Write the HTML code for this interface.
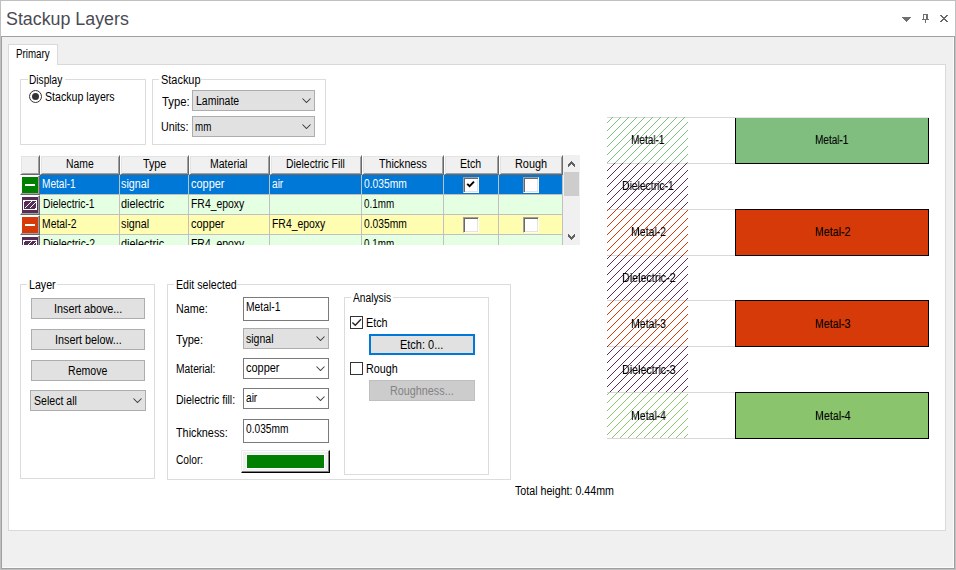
<!DOCTYPE html><html><head><meta charset="utf-8"><title>Stackup Layers</title><style>
*{box-sizing:border-box;margin:0;padding:0}
html,body{width:956px;height:570px;overflow:hidden;background:#f0f0f0}
body{position:relative;font-family:"Liberation Sans",sans-serif;font-size:11px;line-height:13px;color:#000}
.a{position:absolute}
.t{position:absolute;white-space:nowrap;font-size:12px;line-height:20px;transform-origin:0 0}
.gb{position:absolute;border:1px solid #dcdcdc}
.gm{position:absolute;background:#fff;height:3px}
.cb{position:absolute;background:#e1e1e1;border:1px solid #adadad;height:21px}
.cbw{position:absolute;background:#fff;border:1px solid #7a7a7a;height:21px}
.tb{position:absolute;background:#fff;border:1px solid #7a7a7a;height:24px}
.btn{position:absolute;background:#e1e1e1;border:1px solid #adadad;height:21px}
.chev{position:absolute;width:9px;height:5px}
.hc{position:absolute;top:0;height:20px;background:#f0f0f0;border:1px solid;border-color:#fff #696969 #696969 #fff;box-shadow:inset 1px 1px 0 #e3e3e3,inset -1px -1px 0 #a0a0a0}
.rh{position:absolute;left:0;width:20px;height:20px;background:#fff;border:1px solid;border-color:#fff #696969 #696969 #fff;box-shadow:inset -1px -1px 0 #a0a0a0}
.c{position:absolute;height:20px;border-right:1px solid #c0c0c0;border-bottom:1px solid #c0c0c0}
.ck3{position:absolute;width:16px;height:16px;background:#fff;border:1px solid;border-color:#a0a0a0 #fff #fff #a0a0a0;box-shadow:inset 1px 1px 0 #696969,inset -1px -1px 0 #e3e3e3}
</style></head><body>
<div class="a" style="left:0;top:0;width:956px;height:570px;border:1px solid #c0c0c0"></div>
<div class="a" style="left:1px;top:1px;width:954px;height:35px;background:#fff"></div>
<div class="t" style="left:5.6px;top:9px;transform:scaleX(1.0183);font-size:17.5px;color:#4a4a54;">Stackup Layers</div>
<svg class="a" style="left:902px;top:17px" width="9" height="5" shape-rendering="crispEdges"><path d="M0,0H9V1H8V2H7V3H6V4H5V5H4V4H3V3H2V2H1V1H0Z" fill="#707070"/></svg>
<svg class="a" style="left:922px;top:14px" width="8" height="9" shape-rendering="crispEdges"><g fill="#707070"><rect x="1" y="0" width="5" height="1"/><rect x="1" y="0" width="1" height="6"/><rect x="4" y="0" width="2" height="6"/><rect x="0" y="5" width="7" height="1"/><rect x="3" y="6" width="1" height="3"/></g></svg>
<svg class="a" style="left:940px;top:15px" width="8" height="7" shape-rendering="crispEdges"><g fill="#686868"><rect x="0" y="0" width="2" height="1"/><rect x="6" y="0" width="2" height="1"/><rect x="1" y="1" width="2" height="1"/><rect x="5" y="1" width="2" height="1"/><rect x="2" y="2" width="4" height="1"/><rect x="3" y="3" width="2" height="1"/><rect x="2" y="4" width="4" height="1"/><rect x="1" y="5" width="2" height="1"/><rect x="5" y="5" width="2" height="1"/><rect x="0" y="6" width="2" height="1"/><rect x="6" y="6" width="2" height="1"/></g></svg>
<div class="a" style="left:1px;top:36px;width:954px;height:533px;border:1px solid #a0a0a0;box-shadow:inset -1px -1px 0 #fafafa"></div>
<div class="a" style="left:8px;top:64px;width:938px;height:467px;background:#fff;border:1px solid #d9d9d9"></div>
<div class="a" style="left:8px;top:44px;width:50px;height:21px;background:#fff;border:1px solid #d9d9d9;border-bottom:none"></div>
<div class="t" style="left:15.8px;top:44px;transform:scaleX(0.8119);">Primary</div>
<div class="gb" style="left:20px;top:79px;width:126px;height:66px"></div><div class="gm" style="left:28px;top:78px;width:37px"></div><div class="t" style="left:29.1px;top:70px;transform:scaleX(0.845);">Display</div>
<div class="gb" style="left:152px;top:79px;width:174px;height:66px"></div><div class="gm" style="left:159px;top:78px;width:42px"></div><div class="t" style="left:160.9px;top:70px;transform:scaleX(0.9116);">Stackup</div>
<div class="gb" style="left:20px;top:284px;width:135px;height:195px"></div><div class="gm" style="left:27px;top:283px;width:30px"></div><div class="t" style="left:28.9px;top:275px;transform:scaleX(0.8867);">Layer</div>
<div class="gb" style="left:167px;top:284px;width:344px;height:196px"></div><div class="gm" style="left:174px;top:283px;width:63px"></div><div class="t" style="left:176.0px;top:275px;transform:scaleX(0.8838);">Edit selected</div>
<div class="gb" style="left:344px;top:297px;width:145px;height:178px"></div><div class="gm" style="left:351px;top:296px;width:42px"></div><div class="t" style="left:352.6px;top:288px;transform:scaleX(0.8533);">Analysis</div>
<svg class="a" style="left:29px;top:90px" width="13" height="13"><circle cx="6.5" cy="6.5" r="6" fill="#fff" stroke="#333" stroke-width="1"/><circle cx="6.5" cy="6.5" r="3.5" fill="#333"/></svg>
<div class="t" style="left:45.1px;top:87px;transform:scaleX(0.8848);">Stackup layers</div>
<div class="t" style="left:161.6px;top:92px;transform:scaleX(0.9414);">Type:</div>
<div class="cb" style="left:192px;top:90px;width:123px"></div>
<div class="t" style="left:195.6px;top:91px;transform:scaleX(0.8735);">Laminate</div>
<svg class="chev" style="left:301.5px;top:98px" viewBox="0 0 9 5"><path d="M0.5,0.5L4.5,4.5L8.5,0.5" fill="none" stroke="#3a3a3a" stroke-width="1.05"/></svg>
<div class="t" style="left:161.1px;top:117px;transform:scaleX(0.8933);">Units:</div>
<div class="cb" style="left:192px;top:116px;width:123px"></div>
<div class="t" style="left:195.1px;top:117px;transform:scaleX(0.815);">mm</div>
<svg class="chev" style="left:301.5px;top:124px" viewBox="0 0 9 5"><path d="M0.5,0.5L4.5,4.5L8.5,0.5" fill="none" stroke="#3a3a3a" stroke-width="1.05"/></svg>
<div class="a" style="left:20px;top:155px;width:560px;height:90px;overflow:hidden;background:#fff">
<div class="hc" style="left:0;width:20px"></div>
<div class="hc" style="left:20px;width:80px"></div>
<div class="hc" style="left:100px;width:69px"></div>
<div class="hc" style="left:169px;width:81px"></div>
<div class="hc" style="left:250px;width:92px"></div>
<div class="hc" style="left:342px;width:82px"></div>
<div class="hc" style="left:424px;width:55px"></div>
<div class="hc" style="left:479px;width:64px"></div>
<div class="rh" style="top:20px"></div>
<div class="a" style="left:2px;top:22px;width:16px;height:16px;background:#008000"><div class="a" style="left:3px;top:7px;width:10px;height:2px;background:#fff"></div></div>
<div class="c" style="left:20px;top:20px;width:80px;background:#0078d7"></div>
<div class="c" style="left:100px;top:20px;width:69px;background:#0078d7"></div>
<div class="c" style="left:169px;top:20px;width:81px;background:#0078d7"></div>
<div class="c" style="left:250px;top:20px;width:92px;background:#0078d7"></div>
<div class="c" style="left:342px;top:20px;width:82px;background:#0078d7"></div>
<div class="c" style="left:424px;top:20px;width:55px;background:#0078d7"></div>
<div class="c" style="left:479px;top:20px;width:64px;background:#0078d7"></div>
<div class="t" style="left:22.3px;top:19px;transform:scaleX(0.84);color:#fff;">Metal-1</div>
<div class="t" style="left:101.2px;top:19px;transform:scaleX(0.8968);color:#fff;">signal</div>
<div class="t" style="left:170.6px;top:19px;transform:scaleX(0.9135);color:#fff;">copper</div>
<div class="t" style="left:251.6px;top:19px;transform:scaleX(0.8429);color:#fff;">air</div>
<div class="t" style="left:344.0px;top:19px;transform:scaleX(0.856);color:#fff;">0.035mm</div>
<div class="ck3" style="left:443px;top:22px"></div>
<div class="ck3" style="left:503px;top:22px"></div>
<div class="rh" style="top:40px"></div>
<svg class="a" style="left:2px;top:42px" width="16" height="16" shape-rendering="crispEdges"><rect width="16" height="16" fill="#552d55"/><rect x="1" y="3" width="14" height="10" fill="#fff"/><rect x="2" y="4" width="12" height="8" fill="#552d55"/><g fill="#fff"><path d="M3,11h1v-1h1v-1h1v-1h1v-1h1v-1h1v-1h1v-1h-1v1h-1v1h-1v1h-1v1h-1v1h-1v1h-1z"/><path d="M8,11h1v-1h1v-1h1v-1h1v-1h1v-1h1v-1h-1v1h-1v1h-1v1h-1v1h-1v1h-1z"/><rect x="2" y="4" width="1" height="1"/><rect x="13" y="11" width="1" height="1"/></g></svg>
<div class="c" style="left:20px;top:40px;width:80px;background:#e5ffe2"></div>
<div class="c" style="left:100px;top:40px;width:69px;background:#e5ffe2"></div>
<div class="c" style="left:169px;top:40px;width:81px;background:#e5ffe2"></div>
<div class="c" style="left:250px;top:40px;width:92px;background:#e5ffe2"></div>
<div class="c" style="left:342px;top:40px;width:82px;background:#e5ffe2"></div>
<div class="c" style="left:424px;top:40px;width:55px;background:#e5ffe2"></div>
<div class="c" style="left:479px;top:40px;width:64px;background:#e5ffe2"></div>
<div class="t" style="left:22.8px;top:39px;transform:scaleX(0.86);">Dielectric-1</div>
<div class="t" style="left:101.2px;top:39px;transform:scaleX(0.9106);">dielectric</div>
<div class="t" style="left:171.0px;top:39px;transform:scaleX(0.8677);">FR4_epoxy</div>
<div class="t" style="left:344.0px;top:39px;transform:scaleX(0.8216);">0.1mm</div>
<div class="rh" style="top:60px"></div>
<div class="a" style="left:2px;top:62px;width:16px;height:16px;background:#d63a09"><div class="a" style="left:3px;top:7px;width:10px;height:2px;background:#fff"></div></div>
<div class="c" style="left:20px;top:60px;width:80px;background:#fffdb0"></div>
<div class="c" style="left:100px;top:60px;width:69px;background:#fffdb0"></div>
<div class="c" style="left:169px;top:60px;width:81px;background:#fffdb0"></div>
<div class="c" style="left:250px;top:60px;width:92px;background:#fffdb0"></div>
<div class="c" style="left:342px;top:60px;width:82px;background:#fffdb0"></div>
<div class="c" style="left:424px;top:60px;width:55px;background:#fffdb0"></div>
<div class="c" style="left:479px;top:60px;width:64px;background:#fffdb0"></div>
<div class="t" style="left:22.3px;top:59px;transform:scaleX(0.865);">Metal-2</div>
<div class="t" style="left:101.2px;top:59px;transform:scaleX(0.8968);">signal</div>
<div class="t" style="left:170.6px;top:59px;transform:scaleX(0.9135);">copper</div>
<div class="t" style="left:252.0px;top:59px;transform:scaleX(0.8677);">FR4_epoxy</div>
<div class="t" style="left:344.0px;top:59px;transform:scaleX(0.856);">0.035mm</div>
<div class="ck3" style="left:443px;top:62px"></div>
<div class="ck3" style="left:503px;top:62px"></div>
<div class="rh" style="top:80px"></div>
<svg class="a" style="left:2px;top:82px" width="16" height="16" shape-rendering="crispEdges"><rect width="16" height="16" fill="#552d55"/><rect x="1" y="3" width="14" height="10" fill="#fff"/><rect x="2" y="4" width="12" height="8" fill="#552d55"/><g fill="#fff"><path d="M3,11h1v-1h1v-1h1v-1h1v-1h1v-1h1v-1h1v-1h-1v1h-1v1h-1v1h-1v1h-1v1h-1v1h-1z"/><path d="M8,11h1v-1h1v-1h1v-1h1v-1h1v-1h1v-1h-1v1h-1v1h-1v1h-1v1h-1v1h-1z"/><rect x="2" y="4" width="1" height="1"/><rect x="13" y="11" width="1" height="1"/></g></svg>
<div class="c" style="left:20px;top:80px;width:80px;background:#e5ffe2"></div>
<div class="c" style="left:100px;top:80px;width:69px;background:#e5ffe2"></div>
<div class="c" style="left:169px;top:80px;width:81px;background:#e5ffe2"></div>
<div class="c" style="left:250px;top:80px;width:92px;background:#e5ffe2"></div>
<div class="c" style="left:342px;top:80px;width:82px;background:#e5ffe2"></div>
<div class="c" style="left:424px;top:80px;width:55px;background:#e5ffe2"></div>
<div class="c" style="left:479px;top:80px;width:64px;background:#e5ffe2"></div>
<div class="t" style="left:22.8px;top:79px;transform:scaleX(0.8683);">Dielectric-2</div>
<div class="t" style="left:101.2px;top:79px;transform:scaleX(0.9106);">dielectric</div>
<div class="t" style="left:171.0px;top:79px;transform:scaleX(0.8677);">FR4_epoxy</div>
<div class="t" style="left:344.0px;top:79px;transform:scaleX(0.8216);">0.1mm</div>
<svg class="a" style="left:446px;top:25px" width="10" height="9"><path d="M1.2,3.8L3.6,6.2L8,1.6" fill="none" stroke="#000" stroke-width="1.9"/></svg>
<div class="a" style="left:543px;top:0;width:17px;height:90px;background:#f0f0f0"></div>
<div class="a" style="left:544px;top:17px;width:15px;height:24px;background:#cdcdcd"></div>
<svg class="a" style="left:548px;top:6px" width="7" height="6" shape-rendering="crispEdges"><g fill="#606060"><rect x="0" y="3" width="1" height="3"/><rect x="6" y="3" width="1" height="3"/><rect x="1" y="2" width="1" height="3"/><rect x="5" y="2" width="1" height="3"/><rect x="2" y="1" width="1" height="3"/><rect x="4" y="1" width="1" height="3"/><rect x="3" y="0" width="1" height="3"/><rect x="3" y="0" width="1" height="3"/></g></svg>
<svg class="a" style="left:548px;top:79px" width="7" height="6" shape-rendering="crispEdges"><g fill="#606060"><rect x="0" y="0" width="1" height="3"/><rect x="6" y="0" width="1" height="3"/><rect x="1" y="1" width="1" height="3"/><rect x="5" y="1" width="1" height="3"/><rect x="2" y="2" width="1" height="3"/><rect x="4" y="2" width="1" height="3"/><rect x="3" y="3" width="1" height="3"/><rect x="3" y="3" width="1" height="3"/></g></svg>
</div>
<div class="t" style="left:65.8px;top:154px;transform:scaleX(0.8656);">Name</div>
<div class="t" style="left:142.6px;top:154px;transform:scaleX(0.8923);">Type</div>
<div class="t" style="left:210.2px;top:154px;transform:scaleX(0.8762);">Material</div>
<div class="t" style="left:286.0px;top:154px;transform:scaleX(0.8647);">Dielectric Fill</div>
<div class="t" style="left:379.0px;top:154px;transform:scaleX(0.8852);">Thickness</div>
<div class="t" style="left:460.2px;top:154px;transform:scaleX(0.8833);">Etch</div>
<div class="t" style="left:515.0px;top:154px;transform:scaleX(0.9086);">Rough</div>
<div class="btn" style="left:31px;top:298px;width:114px;"></div>
<div class="t" style="left:53.5px;top:299px;transform:scaleX(0.8987);">Insert above...</div>
<div class="btn" style="left:31px;top:329px;width:114px;"></div>
<div class="t" style="left:54.5px;top:330px;transform:scaleX(0.9);">Insert below...</div>
<div class="btn" style="left:31px;top:360px;width:114px;"></div>
<div class="t" style="left:68.1px;top:361px;transform:scaleX(0.88);">Remove</div>
<div class="cb" style="left:30px;top:390px;width:116px"></div>
<div class="t" style="left:34.0px;top:391px;transform:scaleX(0.8813);">Select all</div>
<svg class="chev" style="left:132.5px;top:398px" viewBox="0 0 9 5"><path d="M0.5,0.5L4.5,4.5L8.5,0.5" fill="none" stroke="#3a3a3a" stroke-width="1.05"/></svg>
<div class="t" style="left:175.6px;top:299px;transform:scaleX(0.8943);">Name:</div>
<div class="tb" style="left:243px;top:297px;width:86px"></div>
<div class="t" style="left:246.0px;top:297px;transform:scaleX(0.86);">Metal-1</div>
<div class="t" style="left:176.1px;top:330px;transform:scaleX(0.9241);">Type:</div>
<div class="cb" style="left:243px;top:328px;width:86px"></div>
<div class="t" style="left:246.2px;top:329px;transform:scaleX(0.8774);">signal</div>
<svg class="chev" style="left:315.5px;top:336px" viewBox="0 0 9 5"><path d="M0.5,0.5L4.5,4.5L8.5,0.5" fill="none" stroke="#3a3a3a" stroke-width="1.05"/></svg>
<div class="t" style="left:176.0px;top:359px;transform:scaleX(0.8565);">Material:</div>
<div class="cbw" style="left:243px;top:358px;width:86px"></div>
<div class="t" style="left:245.6px;top:358px;transform:scaleX(0.9135);">copper</div>
<svg class="chev" style="left:315.5px;top:366px" viewBox="0 0 9 5"><path d="M0.5,0.5L4.5,4.5L8.5,0.5" fill="none" stroke="#3a3a3a" stroke-width="1.05"/></svg>
<div class="t" style="left:176.0px;top:390px;transform:scaleX(0.8776);">Dielectric fill:</div>
<div class="cbw" style="left:243px;top:388px;width:86px"></div>
<div class="t" style="left:245.6px;top:388px;transform:scaleX(0.8429);">air</div>
<svg class="chev" style="left:315.5px;top:396px" viewBox="0 0 9 5"><path d="M0.5,0.5L4.5,4.5L8.5,0.5" fill="none" stroke="#3a3a3a" stroke-width="1.05"/></svg>
<div class="t" style="left:176.4px;top:423px;transform:scaleX(0.9018);">Thickness:</div>
<div class="tb" style="left:243px;top:419px;width:86px"></div>
<div class="t" style="left:246.0px;top:419px;transform:scaleX(0.848);">0.035mm</div>
<div class="t" style="left:175.6px;top:450px;transform:scaleX(0.85);">Color:</div>
<div class="a" style="left:241px;top:450px;width:89px;height:23px;background:#f0f0f0;border:1px solid;border-color:#ececec #000 #000 #ececec;box-shadow:inset -1px -1px 0 #808080,inset 1px 1px 0 #fff"></div>
<div class="a" style="left:246px;top:454px;width:79px;height:15px;background:#fff"></div>
<div class="a" style="left:247px;top:455px;width:77px;height:13px;background:#008000"></div>
<svg class="a" style="left:350px;top:316px" width="13" height="13"><rect x="0.5" y="0.5" width="12" height="12" fill="#fff" stroke="#333"/><path d="M2.4,6.4L5.3,9.3L11,3.3" fill="none" stroke="#222" stroke-width="1.35"/></svg>
<div class="t" style="left:366.2px;top:313px;transform:scaleX(0.9);">Etch</div>
<div class="btn" style="left:369px;top:334px;width:106px;border:2px solid #0078d7"></div>
<div class="t" style="left:400.0px;top:335px;transform:scaleX(0.9149);">Etch: 0...</div>
<svg class="a" style="left:350px;top:362px" width="13" height="13"><rect x="0.5" y="0.5" width="12" height="12" fill="#fff" stroke="#333"/></svg>
<div class="t" style="left:366.0px;top:359px;transform:scaleX(0.8971);">Rough</div>
<div class="btn" style="left:369px;top:380px;width:106px;background:#cccccc;border-color:#bfbfbf"></div>
<div class="t" style="left:390.0px;top:381px;transform:scaleX(0.9);color:#838383;">Roughness...</div>
<div class="t" style="left:515.1px;top:481px;transform:scaleX(0.8883);">Total height: 0.44mm</div>
<svg class="a" style="left:607px;top:117px" width="323" height="323" shape-rendering="crispEdges"><defs><pattern id="p5a2d5a" width="8" height="8" patternUnits="userSpaceOnUse"><rect x="5" y="0" width="1" height="1" fill="#5a2d5a"/><rect x="4" y="1" width="1" height="1" fill="#5a2d5a"/><rect x="3" y="2" width="1" height="1" fill="#5a2d5a"/><rect x="2" y="3" width="1" height="1" fill="#5a2d5a"/><rect x="1" y="4" width="1" height="1" fill="#5a2d5a"/><rect x="0" y="5" width="1" height="1" fill="#5a2d5a"/><rect x="7" y="6" width="1" height="1" fill="#5a2d5a"/><rect x="6" y="7" width="1" height="1" fill="#5a2d5a"/></pattern><pattern id="p80c080" width="8" height="8" patternUnits="userSpaceOnUse"><rect x="5" y="0" width="1" height="1" fill="#80c080"/><rect x="4" y="1" width="1" height="1" fill="#80c080"/><rect x="3" y="2" width="1" height="1" fill="#80c080"/><rect x="2" y="3" width="1" height="1" fill="#80c080"/><rect x="1" y="4" width="1" height="1" fill="#80c080"/><rect x="0" y="5" width="1" height="1" fill="#80c080"/><rect x="7" y="6" width="1" height="1" fill="#80c080"/><rect x="6" y="7" width="1" height="1" fill="#80c080"/></pattern><pattern id="p8cc56c" width="8" height="8" patternUnits="userSpaceOnUse"><rect x="5" y="0" width="1" height="1" fill="#8cc56c"/><rect x="4" y="1" width="1" height="1" fill="#8cc56c"/><rect x="3" y="2" width="1" height="1" fill="#8cc56c"/><rect x="2" y="3" width="1" height="1" fill="#8cc56c"/><rect x="1" y="4" width="1" height="1" fill="#8cc56c"/><rect x="0" y="5" width="1" height="1" fill="#8cc56c"/><rect x="7" y="6" width="1" height="1" fill="#8cc56c"/><rect x="6" y="7" width="1" height="1" fill="#8cc56c"/></pattern><pattern id="pd9390a" width="8" height="8" patternUnits="userSpaceOnUse"><rect x="5" y="0" width="1" height="1" fill="#d9390a"/><rect x="4" y="1" width="1" height="1" fill="#d9390a"/><rect x="3" y="2" width="1" height="1" fill="#d9390a"/><rect x="2" y="3" width="1" height="1" fill="#d9390a"/><rect x="1" y="4" width="1" height="1" fill="#d9390a"/><rect x="0" y="5" width="1" height="1" fill="#d9390a"/><rect x="7" y="6" width="1" height="1" fill="#d9390a"/><rect x="6" y="7" width="1" height="1" fill="#d9390a"/></pattern></defs><rect x="0" y="0" width="128" height="1" fill="#d8d8d8"/><rect x="0" y="46" width="128" height="1" fill="#d8d8d8"/><rect x="0" y="92" width="128" height="1" fill="#d8d8d8"/><rect x="0" y="138" width="128" height="1" fill="#d8d8d8"/><rect x="0" y="183" width="128" height="1" fill="#d8d8d8"/><rect x="0" y="229" width="128" height="1" fill="#d8d8d8"/><rect x="0" y="275" width="128" height="1" fill="#d8d8d8"/><rect x="0" y="321" width="128" height="1" fill="#d8d8d8"/><rect x="0" y="0" width="81" height="46" fill="url(#p80c080)"/><rect x="0" y="46" width="81" height="46" fill="url(#p5a2d5a)"/><rect x="0" y="92" width="81" height="46" fill="url(#pd9390a)"/><rect x="0" y="138" width="81" height="45" fill="url(#p5a2d5a)"/><rect x="0" y="183" width="81" height="46" fill="url(#pd9390a)"/><rect x="0" y="229" width="81" height="46" fill="url(#p5a2d5a)"/><rect x="0" y="275" width="81" height="46" fill="url(#p8cc56c)"/><rect x="128" y="0" width="194" height="47" fill="#000"/><rect x="129" y="1" width="192" height="45" fill="#80be80"/><rect x="128" y="92" width="194" height="47" fill="#000"/><rect x="129" y="93" width="192" height="45" fill="#d63a09"/><rect x="128" y="183" width="194" height="47" fill="#000"/><rect x="129" y="184" width="192" height="45" fill="#d63a09"/><rect x="128" y="275" width="194" height="47" fill="#000"/><rect x="129" y="276" width="192" height="45" fill="#8ac46c"/><rect x="128" y="0" width="194" height="1" fill="#e6e0e6"/></svg>
<div class="t" style="left:631.3px;top:130px;transform:scaleX(0.8375);will-change:transform;-webkit-text-stroke:0.12px #000;">Metal-1</div>
<div class="t" style="left:815.2px;top:130px;transform:scaleX(0.835);will-change:transform;-webkit-text-stroke:0.12px #000;">Metal-1</div>
<div class="t" style="left:622.3px;top:176px;transform:scaleX(0.865);will-change:transform;-webkit-text-stroke:0.12px #000;">Dielectric-1</div>
<div class="t" style="left:631.3px;top:222px;transform:scaleX(0.8775);will-change:transform;-webkit-text-stroke:0.12px #000;">Metal-2</div>
<div class="t" style="left:815.2px;top:222px;transform:scaleX(0.8925);will-change:transform;-webkit-text-stroke:0.12px #000;">Metal-2</div>
<div class="t" style="left:622.3px;top:268px;transform:scaleX(0.895);will-change:transform;-webkit-text-stroke:0.12px #000;">Dielectric-2</div>
<div class="t" style="left:631.3px;top:314px;transform:scaleX(0.8775);will-change:transform;-webkit-text-stroke:0.12px #000;">Metal-3</div>
<div class="t" style="left:815.2px;top:314px;transform:scaleX(0.8925);will-change:transform;-webkit-text-stroke:0.12px #000;">Metal-3</div>
<div class="t" style="left:622.3px;top:360px;transform:scaleX(0.895);will-change:transform;-webkit-text-stroke:0.12px #000;">Dielectric-3</div>
<div class="t" style="left:631.3px;top:406px;transform:scaleX(0.8775);will-change:transform;-webkit-text-stroke:0.12px #000;">Metal-4</div>
<div class="t" style="left:815.2px;top:406px;transform:scaleX(0.8925);will-change:transform;-webkit-text-stroke:0.12px #000;">Metal-4</div>
</body></html>
